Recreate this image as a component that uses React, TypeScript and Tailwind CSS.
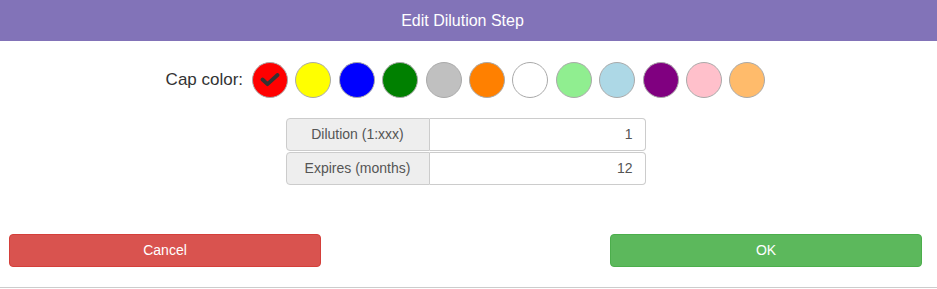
import React from 'react';

const CAP_COLORS = [
  '#ff0000', '#ffff00', '#0000ff', '#008000', '#c0c0c0', '#ff8000',
  '#ffffff', '#90ee90', '#add8e6', '#800080', '#ffc0cb', '#ffbb6b',
];

function CheckIcon() {
  return (
    <svg width="20" height="14" viewBox="0 0 20 14" fill="none">
      <path d="M2.5 6.5 L7.5 11.2 L17.5 2" stroke="#333" strokeWidth="3.8" strokeLinecap="round" strokeLinejoin="round" />
    </svg>
  );
}

function Field({ label, value }: { label: string; value: string }) {
  return (
    <div className="flex h-[33px] w-[360px]">
      <div className="flex w-[144px] items-center justify-center rounded-l-[4px] border border-[#cccccc] bg-[#eeeeee] text-[14px] text-[#555555]">
        {label}
      </div>
      <div className="flex flex-1 items-center justify-end rounded-r-[4px] border border-l-0 border-[#cccccc] bg-white px-3 text-[14px] text-[#555555]">
        {value}
      </div>
    </div>
  );
}

export default function App() {
  const selected = 0;

  return (
    <div className="h-[289px] w-[937px] overflow-hidden bg-white font-['Liberation_Sans',Arial,sans-serif]">
      <div className="flex h-[41px] items-center justify-center bg-[#8273b8] pr-[12px] text-[16px] text-white">
        Edit Dilution Step
      </div>

      <div className="h-[247px] overflow-hidden border-b border-[#cccccc] pl-[9px] pr-[15px]">
        {/* Cap colours */}
        <div className="mt-[21px] flex items-center justify-center">
          <span className="mr-[9px] text-[17px] text-[#333333]">Cap color:</span>
          <div className="flex gap-[7.4px]">
            {CAP_COLORS.map((c, i) => (
              <div
                key={c}
                className="flex h-9 w-9 items-center justify-center rounded-full border border-[#aaaaaa]"
                style={{ backgroundColor: c }}
              >
                {i === selected && <CheckIcon />}
              </div>
            ))}
          </div>
        </div>

        {/* Fields */}
        <div className="mt-[20px] flex flex-col items-center gap-px">
          <Field label="Dilution (1:xxx)" value="1" />
          <Field label="Expires (months)" value="12" />
        </div>

        {/* Buttons */}
        <div className="mt-[49px] flex justify-between">
          <button className="h-[33px] w-[312px] rounded-[4px] border border-[#d43f3a] bg-[#d9534f] text-[14px] text-white">
            Cancel
          </button>
          <button className="h-[33px] w-[312px] rounded-[4px] border border-[#4cae4c] bg-[#5cb85c] text-[14px] text-white">
            OK
          </button>
        </div>
      </div>
    </div>
  );
}
